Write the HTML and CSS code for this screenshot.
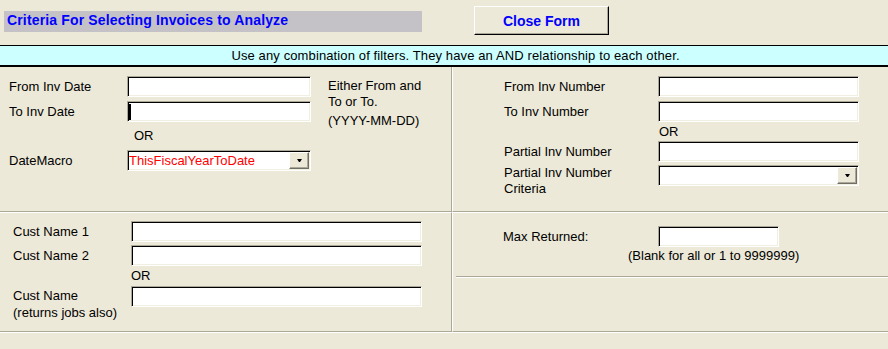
FILE: index.html
```html
<!DOCTYPE html>
<html lang="en">
<head>
    <meta charset="UTF-8">
    <meta name="viewport" content="width=device-width, initial-scale=1.0">
    <title>Criteria For Selecting Invoices to Analyze</title>
    <link rel="stylesheet" href="styles.css">
</head>
<body>
    <div class="topbar">
        <div class="form-title">Criteria For Selecting Invoices to Analyze</div>
        <button class="close-btn" type="button">Close Form</button>
    </div>
    <div class="banner">Use any combination of filters. They have an AND relationship to each other.</div>

    <div class="panels">
        <!-- invoice dates -->
        <section class="panel panel-left panel-top dates">
            <div class="fields">
                <div class="field">
                    <span class="label">From Inv Date</span>
                    <div class="box"></div>
                </div>
                <div class="field gap-4">
                    <span class="label">To Inv Date</span>
                    <div class="box"><span class="caret"></span></div>
                </div>
                <div class="or">OR</div>
                <div class="field">
                    <span class="label">DateMacro</span>
                    <div class="box combo">
                        <span class="combo-value">ThisFiscalYearToDate</span>
                        <span class="drop-btn"><span class="arrow"></span></span>
                    </div>
                </div>
            </div>
            <div class="note">
                <p>Either From and<br>To or To.</p>
                <p class="note-format">(YYYY-MM-DD)</p>
            </div>
        </section>

        <!-- invoice numbers -->
        <section class="panel panel-right panel-top numbers">
            <div class="field">
                <span class="label">From Inv Number</span>
                <div class="box"></div>
            </div>
            <div class="field gap-4">
                <span class="label">To Inv Number</span>
                <div class="box"></div>
            </div>
            <div class="or">OR</div>
            <div class="field">
                <span class="label">Partial Inv Number</span>
                <div class="box"></div>
            </div>
            <div class="field field-tall gap-3">
                <span class="label">Partial Inv Number<br>Criteria</span>
                <div class="box combo">
                    <span class="combo-value"></span>
                    <span class="drop-btn"><span class="arrow"></span></span>
                </div>
            </div>
        </section>

        <!-- customer names -->
        <section class="panel panel-left panel-bottom names">
            <div class="field">
                <span class="label">Cust Name 1</span>
                <div class="box"></div>
            </div>
            <div class="field gap-3">
                <span class="label">Cust Name 2</span>
                <div class="box"></div>
            </div>
            <div class="or">OR</div>
            <div class="field field-tall">
                <span class="label">Cust Name<br>(returns jobs also)</span>
                <div class="box"></div>
            </div>
        </section>

        <!-- row limit -->
        <section class="panel panel-right panel-bottom limits">
            <div class="field">
                <span class="label">Max Returned:</span>
                <div class="box"></div>
            </div>
            <div class="hint">(Blank for all or 1 to 9999999)</div>
            <div class="rule"></div>
        </section>
    </div>
    <div class="footer"></div>
</body>
</html>
```

FILE: styles.css
```css
body {
    margin: 0;
    background: #ece9d8;
    color: #000;
    font-family: "Liberation Sans", Arial, sans-serif;
    font-size: 13px;
}
p {
    margin: 0;
}

/* header */
.topbar {
    display: flex;
    align-items: flex-start;
    height: 45px;
}
.form-title {
    box-sizing: border-box;
    width: 418px;
    height: 21px;
    margin: 11px 0 0 4px;
    padding-left: 3px;
    background: #c4c2c7;
    color: #0000ff;
    font-size: 14px;
    font-weight: bold;
    letter-spacing: 0.15px;
    line-height: 19px;
}
.close-btn {
    box-sizing: border-box;
    width: 135px;
    height: 29px;
    margin: 6px 0 0 52px;
    padding: 0;
    background: #ece9d8;
    border: 1px solid;
    border-color: #fff #000 #000 #fff;
    box-shadow: inset -1px -1px #aca899;
    color: #0000ff;
    font: bold 14px "Liberation Sans", Arial, sans-serif;
}
.banner {
    height: 19px;
    padding-left: 23px;
    background: #ccffff;
    border-top: 1px solid #000;
    border-bottom: 2px solid #000;
    letter-spacing: 0.12px;
    line-height: 19px;
    text-align: center;
}

/* panels */
.panels {
    display: grid;
    grid-template-columns: 452px 1fr;
    grid-template-rows: 145px 120px;
}
.panel {
    box-sizing: border-box;
}
.panel-left {
    border-right: 1px solid #aca899;
}
.panel-right {
    border-left: 1px solid #fff;
}
.panel-top {
    padding-top: 9px;
    border-bottom: 1px solid #aca899;
}
.panel-bottom {
    border-top: 1px solid #fff;
    border-bottom: 1px solid #aca899;
}
.footer {
    height: 16px;
    border-top: 1px solid #fff;
}

/* fields */
.field {
    display: flex;
    align-items: center;
    height: 21px;
}
.field-tall {
    align-items: flex-start;
}
.gap-3 {
    margin-top: 3px;
}
.gap-4 {
    margin-top: 4px;
}
.label {
    flex: none;
    line-height: 16px;
}
.box {
    box-sizing: border-box;
    display: flex;
    align-items: center;
    height: 21px;
    background: #fff;
    border: 1px solid;
    border-color: #aca899 #fff #fff #aca899;
    box-shadow: inset 1px 1px #000, inset -1px -1px #f1efe2;
}
.caret {
    width: 2px;
    height: 16px;
    margin-left: 1px;
    background: #000;
}
.combo-value {
    flex: 1;
    padding-left: 1px;
    color: #ff0000;
    line-height: 16px;
}
.drop-btn {
    box-sizing: border-box;
    display: flex;
    align-items: center;
    justify-content: center;
    width: 20px;
    height: 17px;
    margin-right: 1px;
    background: #ece9d8;
    border: 1px solid;
    border-color: #fff #716f64 #716f64 #fff;
    box-shadow: inset -1px -1px #aca899;
}
.arrow {
    width: 1px;
    height: 0;
    border-top: 3px solid #000;
    border-left: 2px solid transparent;
    border-right: 2px solid transparent;
}

/* dates */
.dates {
    display: flex;
    padding-left: 9px;
}
.dates .label {
    width: 118px;
}
.dates .box {
    width: 184px;
}
.dates .or {
    margin-left: 125px;
    line-height: 28px;
}
.note {
    margin: 2px 0 0 17px;
    line-height: 16px;
}
.note-format {
    margin-top: 3px;
}

/* numbers */
.numbers {
    padding-left: 51px;
}
.numbers .label {
    width: 154px;
}
.numbers .box {
    width: 201px;
}
.numbers .or {
    margin-left: 155px;
    line-height: 19px;
}

/* names */
.names {
    padding: 8px 0 0 13px;
}
.names .label {
    width: 118px;
}
.names .field-tall .label {
    padding-top: 1px;
    line-height: 17px;
}
.names .box {
    width: 291px;
}
.names .or {
    margin-left: 118px;
    line-height: 20px;
}

/* limits */
.limits {
    padding-top: 13px;
}
.limits .field {
    padding-left: 50px;
}
.limits .label {
    width: 155px;
}
.limits .box {
    width: 121px;
}
.hint {
    margin: 1px 0 0 175px;
    line-height: 16px;
}
.rule {
    margin: 12px 0 0 3px;
    border-top: 1px solid #aca899;
    border-bottom: 1px solid #fff;
}
```
